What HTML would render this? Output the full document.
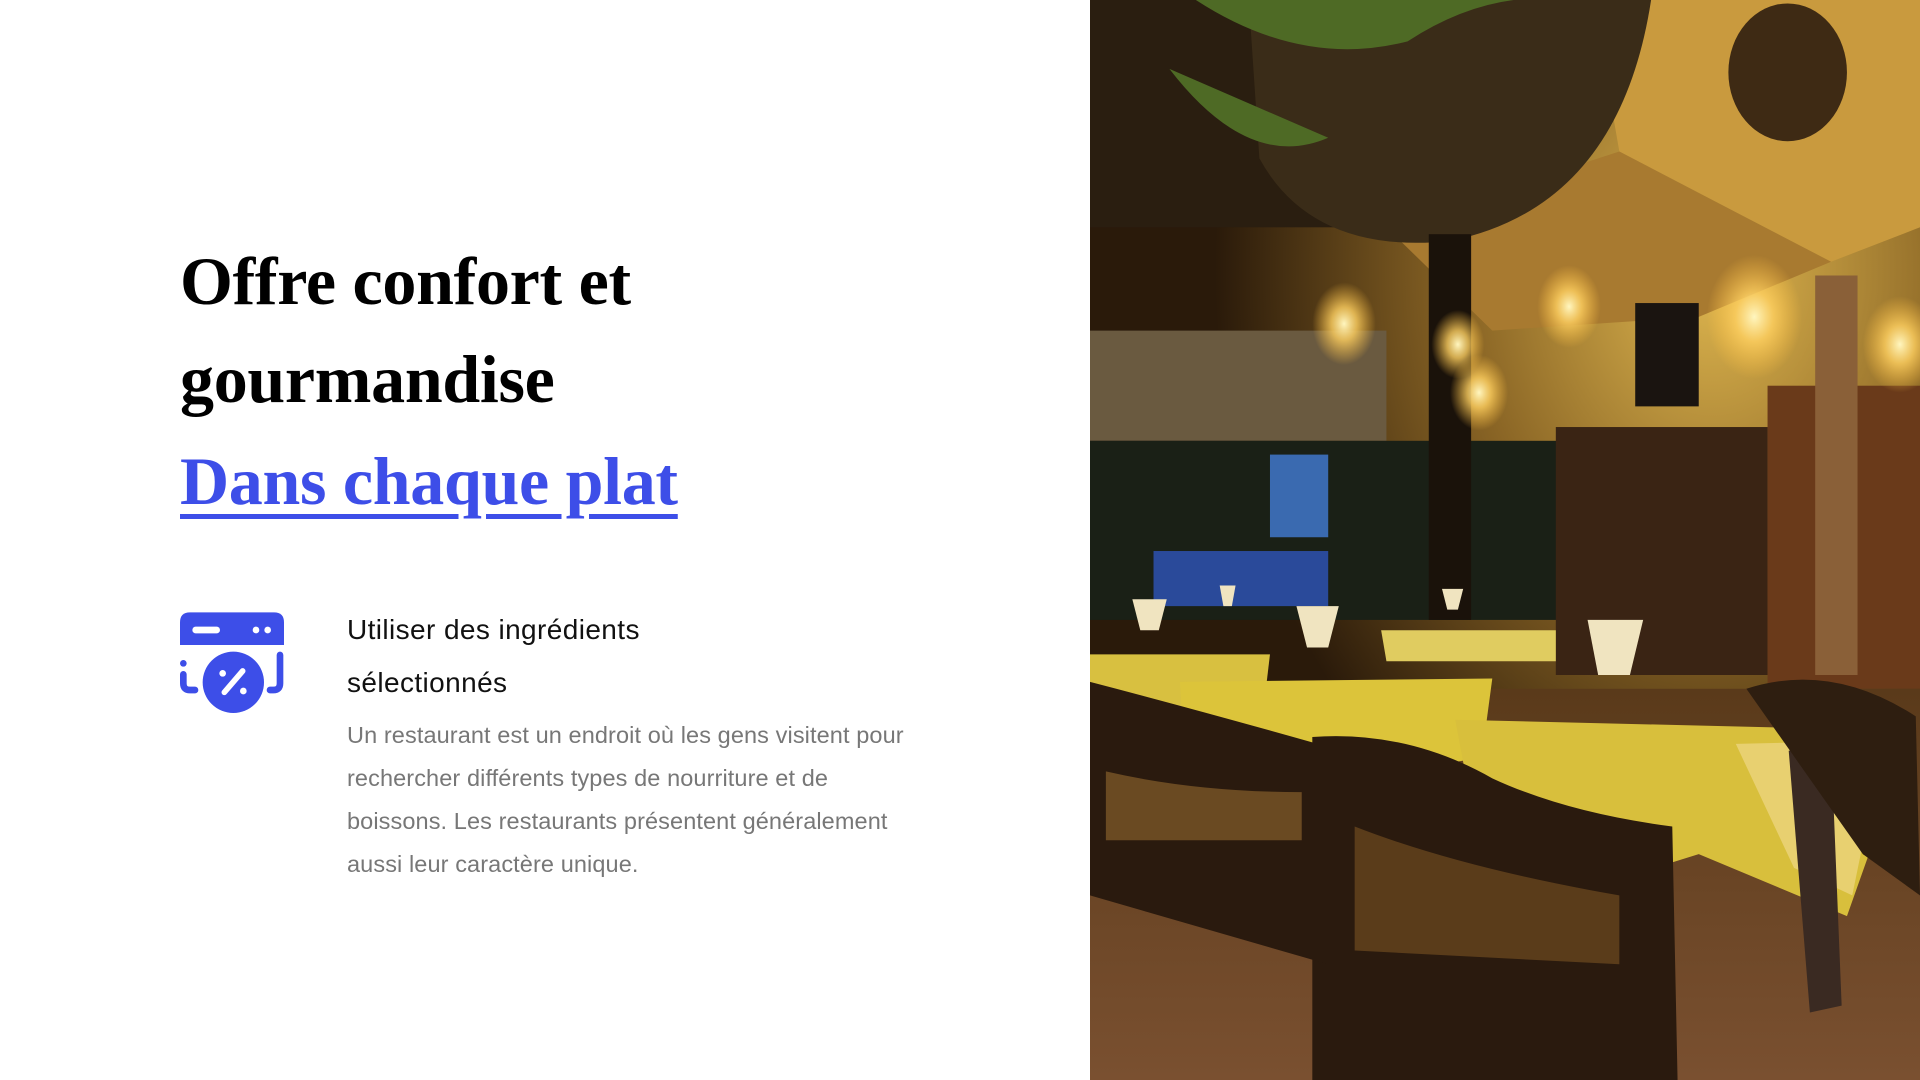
<!DOCTYPE html>
<html><head><meta charset="utf-8"><style>
html,body{margin:0;padding:0;width:1920px;height:1080px;background:#fff;overflow:hidden;position:relative}
.h{position:absolute;left:180px;font-family:"Liberation Serif",serif;font-weight:bold;font-size:68px;letter-spacing:-0.3px;color:#000;white-space:nowrap;line-height:1}
.blue{color:#3d4ee8;text-decoration:underline;text-decoration-thickness:5px;text-underline-offset:10px}
.s{position:absolute;left:347px;font-family:"Liberation Sans",sans-serif;font-size:28px;color:#111;white-space:nowrap;letter-spacing:0.4px;line-height:1}
.p{position:absolute;left:347px;font-family:"Liberation Sans",sans-serif;font-size:23.5px;color:#777;white-space:nowrap;letter-spacing:0.1px;line-height:1}
</style></head><body>
<div class="h" style="top:247px">Offre confort et</div>
<div class="h" style="top:345px">gourmandise</div>
<div class="h blue" style="top:447px">Dans chaque plat</div>

<svg style="position:absolute;left:175px;top:605px" width="115" height="110" viewBox="0 0 345 330">
<path d="M15 120 V52 Q15 22 45 22 H297 Q327 22 327 52 V120 Z" fill="#3d4ee8"/>
<rect x="52" y="65" width="83" height="20" rx="10" fill="#fff"/>
<circle cx="243" cy="75" r="10" fill="#fff"/><circle cx="278" cy="75" r="10" fill="#fff"/>
<circle cx="25" cy="175" r="10" fill="#3d4ee8"/>
<path d="M25 208 V235 Q25 255 45 255 H60" stroke="#3d4ee8" stroke-width="20" fill="none" stroke-linecap="round"/>
<path d="M315 150 V235 Q315 255 295 255 H285" stroke="#3d4ee8" stroke-width="20" fill="none" stroke-linecap="round"/>
<circle cx="175" cy="232" r="92" fill="#3d4ee8"/>
<path d="M203 198 L148 262" stroke="#fff" stroke-width="17" stroke-linecap="round"/>
<circle cx="143" cy="205" r="10" fill="#fff"/><circle cx="205" cy="258" r="10" fill="#fff"/>
</svg>

<div class="s" style="top:616px">Utiliser des ingrédients</div>
<div class="s" style="top:669px">sélectionnés</div>
<div class="p" style="top:724px">Un restaurant est un endroit où les gens visitent pour</div>
<div class="p" style="top:767px">rechercher différents types de nourriture et de</div>
<div class="p" style="top:810px">boissons. Les restaurants présentent généralement</div>
<div class="p" style="top:853px">aussi leur caractère unique.</div>

<svg style="position:absolute;left:1090px;top:0" width="830" height="1080" viewBox="0 0 1568 1568" preserveAspectRatio="none">
<defs>
<radialGradient id="g1" cx="0.75" cy="0.25" r="0.6"><stop offset="0" stop-color="#e0b850"/><stop offset="0.5" stop-color="#8a6525"/><stop offset="1" stop-color="#2a1a0a"/></radialGradient>
<radialGradient id="lt" cx="0.5" cy="0.5" r="0.5"><stop offset="0" stop-color="#fff6c0"/><stop offset="0.4" stop-color="#ffd060" stop-opacity="0.8"/><stop offset="1" stop-color="#ffc040" stop-opacity="0"/></radialGradient>
<linearGradient id="fl" x1="0" y1="0" x2="0" y2="1"><stop offset="0" stop-color="#5a3a1a"/><stop offset="1" stop-color="#7a5030"/></linearGradient>
</defs>
<rect width="1568" height="1568" fill="url(#g1)"/>
<polygon points="950,0 1568,0 1568,330 1400,380 1000,220" fill="#c99a3e"/>
<polygon points="560,330 1000,220 1400,380 1150,460 760,480" fill="#a87a30"/>
<rect x="0" y="0" width="560" height="330" fill="#2a1e10"/>
<path d="M300 0 H1060 Q1000 300 680 350 Q420 370 320 230 Z" fill="#3a2c18"/>
<path d="M200 0 Q400 100 600 60 Q700 10 800 0 Z M150 100 Q300 250 450 200" fill="#4e6a25"/>
<ellipse cx="1318" cy="105" rx="112" ry="100" fill="#3e2a14"/>
<rect x="0" y="480" width="560" height="160" fill="#6a5a40"/>
<rect x="0" y="640" width="900" height="260" fill="#1a2016"/>
<rect x="120" y="800" width="330" height="80" fill="#2a4a9a"/>
<rect x="340" y="660" width="110" height="120" fill="#3a6ab0"/>
<rect x="880" y="620" width="400" height="360" fill="#3a2414"/>
<rect x="1280" y="560" width="288" height="440" fill="#6a3a1a"/>
<rect x="1370" y="400" width="80" height="580" fill="#8a6038"/>
<rect x="640" y="340" width="80" height="560" fill="#1a120a"/>
<rect x="1030" y="440" width="120" height="150" fill="#1a1410"/>
<circle cx="480" cy="470" r="60" fill="url(#lt)"/>
<circle cx="695" cy="500" r="50" fill="url(#lt)"/>
<circle cx="735" cy="570" r="55" fill="url(#lt)"/>
<circle cx="905" cy="445" r="60" fill="url(#lt)"/>
<circle cx="1255" cy="460" r="90" fill="url(#lt)"/>
<circle cx="1530" cy="500" r="70" fill="url(#lt)"/>
<rect x="0" y="1000" width="1568" height="568" fill="url(#fl)"/>
<polygon points="0,950 340,950 320,1080 0,1080" fill="#d8c040"/>
<polygon points="170,990 760,985 740,1100 420,1140 180,1120" fill="#dcc43a"/>
<polygon points="550,915 880,915 880,960 560,960" fill="#e0cc60"/>
<polygon points="690,1045 1510,1060 1490,1200 1430,1330 1150,1240 900,1300 740,1250" fill="#d8bf3c"/>
<polygon points="1220,1080 1500,1075 1440,1300 1330,1260" fill="#e8d070"/>
<path d="M1320 1090 L1400 1080 L1420 1460 L1360 1470 Z" fill="#3a2a22"/>
<path d="M420 1070 Q600 1060 760 1130 Q900 1180 1100 1200 L1110 1568 L420 1568 Z" fill="#2a1a0e"/>
<path d="M500 1200 Q700 1260 1000 1300 L1000 1400 L500 1380 Z" fill="#5a3c1a"/>
<path d="M0 990 Q200 1030 430 1080 L450 1400 L0 1300 Z" fill="#2a1a0e"/>
<path d="M30 1120 Q200 1150 400 1150 L400 1220 L30 1220 Z" fill="#6a4a22"/>
<path d="M1240 1000 Q1400 960 1560 1040 L1568 1300 L1460 1240 Z" fill="#2e1e10"/>
<g fill="#f0e4c0"><path d="M80 870 H145 L130 915 H95 Z"/><path d="M390 880 H470 L450 940 H410 Z"/><path d="M940 900 H1045 L1020 980 H960 Z"/><path d="M665 855 H705 L695 885 H675 Z"/><path d="M245 850 H275 L268 880 H252 Z"/></g>
</svg>
</body></html>
